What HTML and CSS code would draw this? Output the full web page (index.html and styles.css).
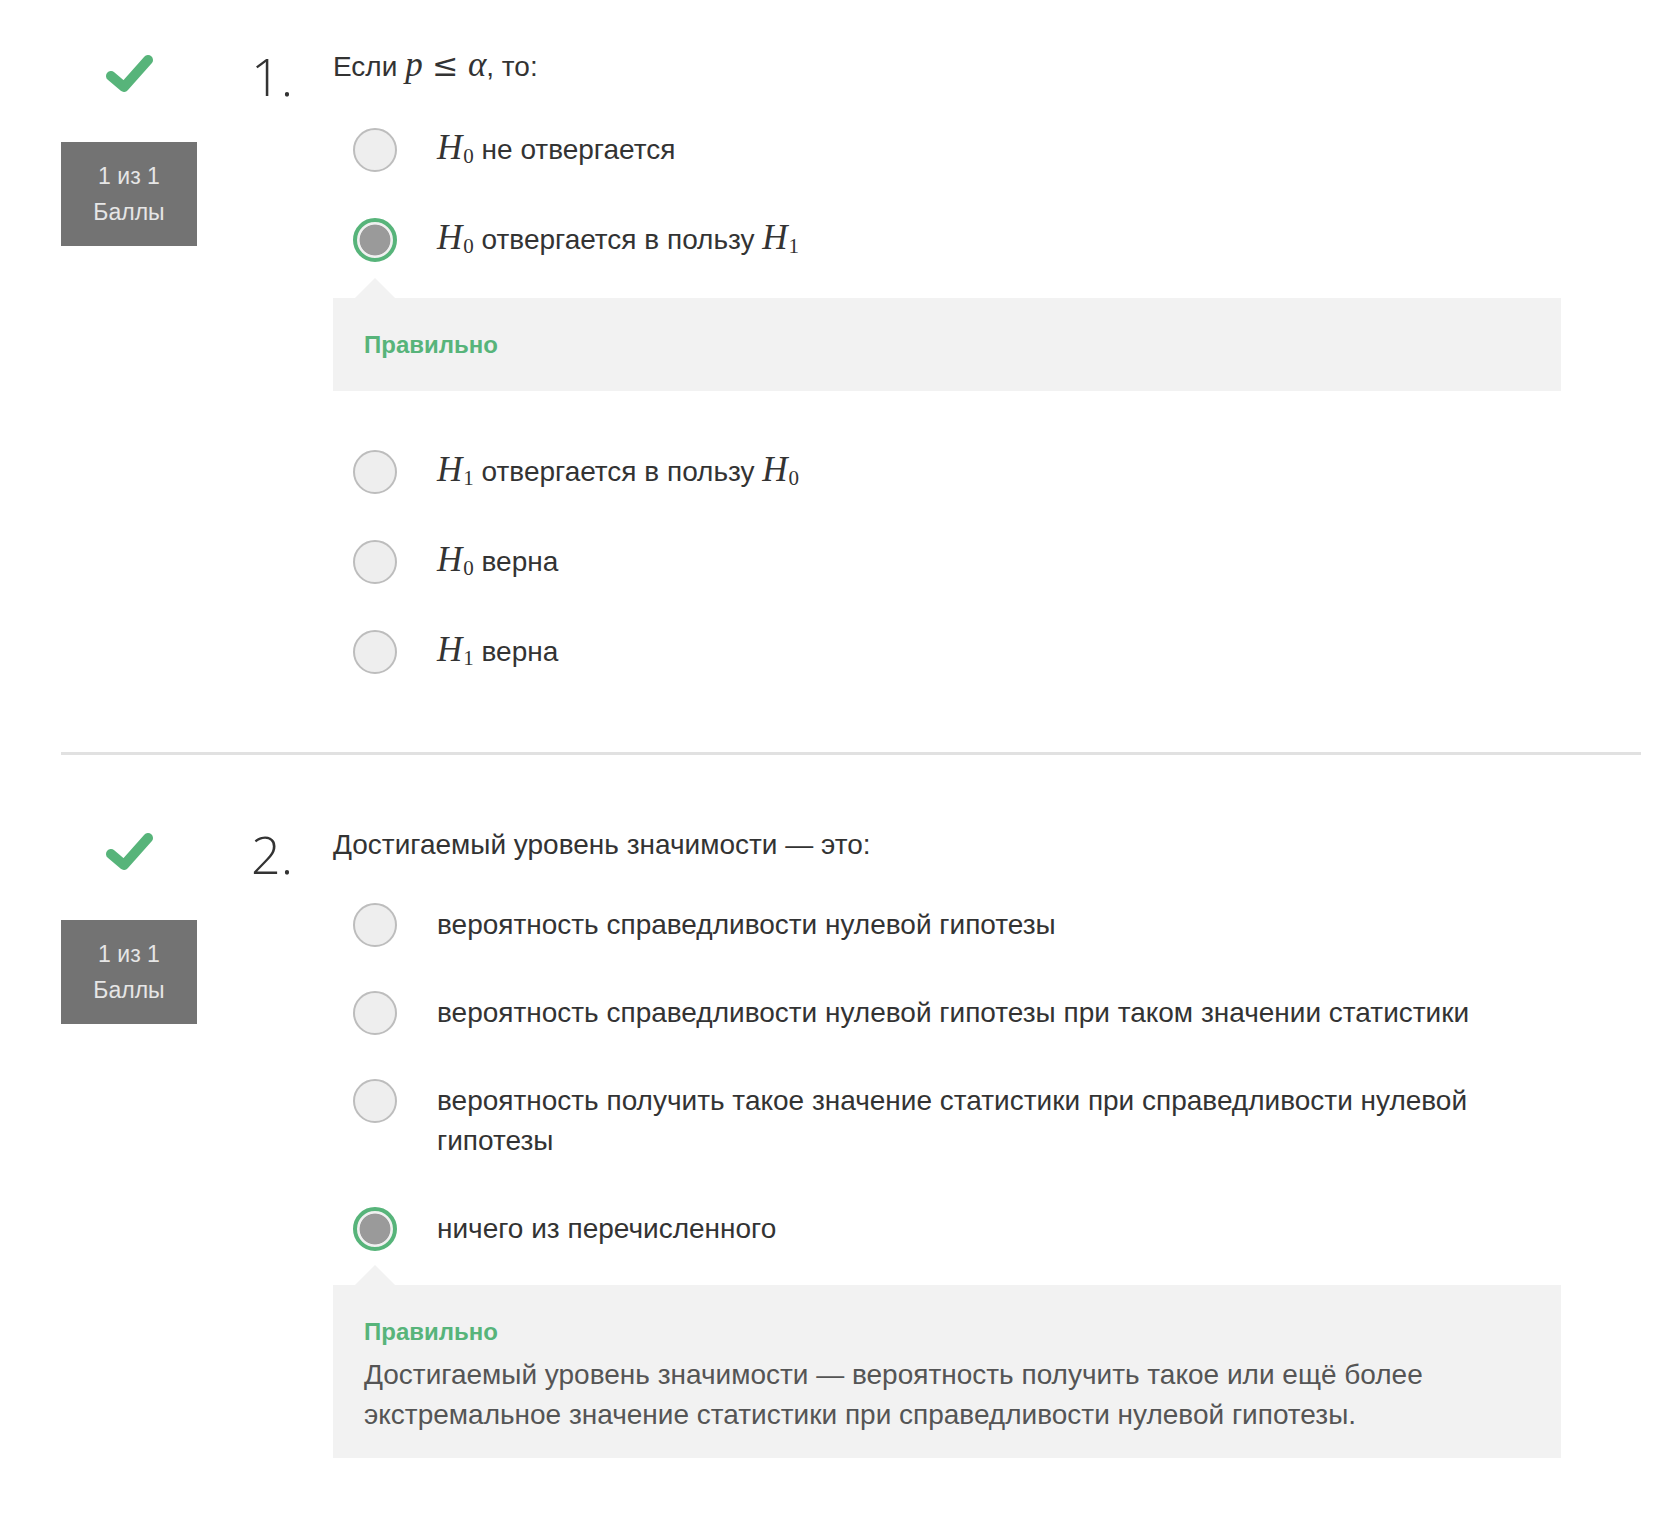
FILE: index.html
```html
<!DOCTYPE html>
<html lang="ru">
<head>
<meta charset="utf-8">
<title>Тест</title>
<link rel="stylesheet" href="styles.css">
</head>
<body>
<div class="page">
  <section class="question">
    <div class="status">
      <svg class="check" viewBox="0 0 48 38" width="48" height="38"><polyline points="6,22 19,33 43,6" fill="none" stroke="#57b47a" stroke-width="10" stroke-linecap="round" stroke-linejoin="round"/></svg>
      <div class="score"><div>1 из 1</div><div>Баллы</div></div>
    </div>
    <div class="num">1.</div>
    <div class="body">
      <div class="prompt">Если <span class="math"><i>p</i><span class="rel">≤</span><i>α</i></span>, то:</div>
      <div class="options tall">
        <div class="option"><span class="radio"></span><span class="label"><span class="math"><i>H</i><sub>0</sub></span> не отвергается</span></div>
        <div class="option"><span class="radio selected"></span><span class="label"><span class="math"><i>H</i><sub>0</sub></span> отвергается в пользу <span class="math"><i>H</i><sub>1</sub></span></span></div>
        <div class="feedback"><div class="fb-title">Правильно</div></div>
        <div class="option"><span class="radio"></span><span class="label"><span class="math"><i>H</i><sub>1</sub></span> отвергается в пользу <span class="math"><i>H</i><sub>0</sub></span></span></div>
        <div class="option"><span class="radio"></span><span class="label"><span class="math"><i>H</i><sub>0</sub></span> верна</span></div>
        <div class="option"><span class="radio"></span><span class="label"><span class="math"><i>H</i><sub>1</sub></span> верна</span></div>
      </div>
    </div>
  </section>
  <hr class="divider">
  <section class="question">
    <div class="status">
      <svg class="check" viewBox="0 0 48 38" width="48" height="38"><polyline points="6,22 19,33 43,6" fill="none" stroke="#57b47a" stroke-width="10" stroke-linecap="round" stroke-linejoin="round"/></svg>
      <div class="score"><div>1 из 1</div><div>Баллы</div></div>
    </div>
    <div class="num">2.</div>
    <div class="body">
      <div class="prompt">Достигаемый уровень значимости — это:</div>
      <div class="options">
        <div class="option"><span class="radio"></span><span class="label">вероятность справедливости нулевой гипотезы</span></div>
        <div class="option"><span class="radio"></span><span class="label">вероятность справедливости нулевой гипотезы при таком значении статистики</span></div>
        <div class="option"><span class="radio"></span><span class="label">вероятность получить такое значение статистики при справедливости нулевой гипотезы</span></div>
        <div class="option"><span class="radio selected"></span><span class="label">ничего из перечисленного</span></div>
        <div class="feedback"><div class="fb-title">Правильно</div><div class="fb-text">Достигаемый уровень значимости — вероятность получить такое или ещё более экстремальное значение статистики при справедливости нулевой гипотезы.</div></div>
      </div>
    </div>
  </section>
</div>
</body>
</html>
```
FILE: styles.css
```css
html, body {
  margin: 0;
  padding: 0;
  background: #ffffff;
}
body {
  font-family: "Liberation Sans", Arial, sans-serif;
  color: #333333;
}
.page {
  padding: 49px 25px 60px 61px;
}
.question {
  display: grid;
  grid-template-columns: 136px 136px 1228px;
  align-items: start;
}
.status {
  padding-top: 5px;
  display: flex;
  flex-direction: column;
  align-items: center;
}
.check {
  display: block;
}
.score {
  margin-top: 50px;
  width: 136px;
  height: 104px;
  box-sizing: border-box;
  padding: 16px 0;
  background: #737373;
  color: #e6e6e6;
  font-size: 23px;
  line-height: 36px;
  text-align: center;
}
.num {
  font-family: "Open Sans", sans-serif;
  font-weight: 300;
  font-size: 52px;
  line-height: 50px;
  padding-left: 54px;
  margin-top: 2px;
  color: #333;
}
.prompt {
  font-size: 28px;
  line-height: 36px;
}
.math {
  font-family: "Liberation Serif", "Times New Roman", serif;
  font-size: 35px;
  line-height: 0;
  white-space: nowrap;
}
.math i {
  font-style: italic;
}
.math sub {
  font-style: normal;
  font-size: 0.6em;
  line-height: 0;
  vertical-align: -0.2em;
  margin-left: 1px;
}
.math .rel {
  font-family: "DejaVu Serif", serif;
  font-size: 0.9em;
  margin: 0 0.3em;
}
.options {
  margin-top: 18px;
}
.options.tall {
  margin-top: 20px;
}
.option {
  display: flex;
  align-items: flex-start;
  padding: 24px 0 24px 20px;
}
.tall .option {
  padding: 25px 0 25px 20px;
}
.radio {
  flex: none;
  width: 44px;
  height: 44px;
  box-sizing: border-box;
  border-radius: 50%;
  border: 2px solid #bdbdbd;
  background: #eeeeee;
  margin: -2px 40px -2px 0;
}
.radio.selected {
  border: 4px solid #57b47a;
  background: radial-gradient(circle, #9a9a9a 0 15px, #f0f0f0 15.8px);
}
.label {
  font-size: 28px;
  line-height: 40px;
}
.feedback {
  position: relative;
  background: #f2f2f2;
  margin: 12px 0 36px;
  padding: 32px 30px 31px 31px;
}
.tall .feedback {
  margin-top: 13px;
}
.options .feedback:last-child {
  margin-bottom: 0;
}
.feedback::before {
  content: "";
  position: absolute;
  left: 22px;
  top: -20px;
  width: 0;
  height: 0;
  border-left: 20px solid transparent;
  border-right: 20px solid transparent;
  border-bottom: 20px solid #f2f2f2;
}
.fb-title {
  color: #57b47a;
  font-weight: bold;
  font-size: 24px;
  line-height: 30px;
}
.fb-text {
  color: #555555;
  font-size: 28px;
  line-height: 40px;
  margin: 8px 0 -8px;
}
.divider {
  border: 0;
  height: 3px;
  background: #e1e1e1;
  margin: 55px 0 72px;
  width: 1580px;
}
```
